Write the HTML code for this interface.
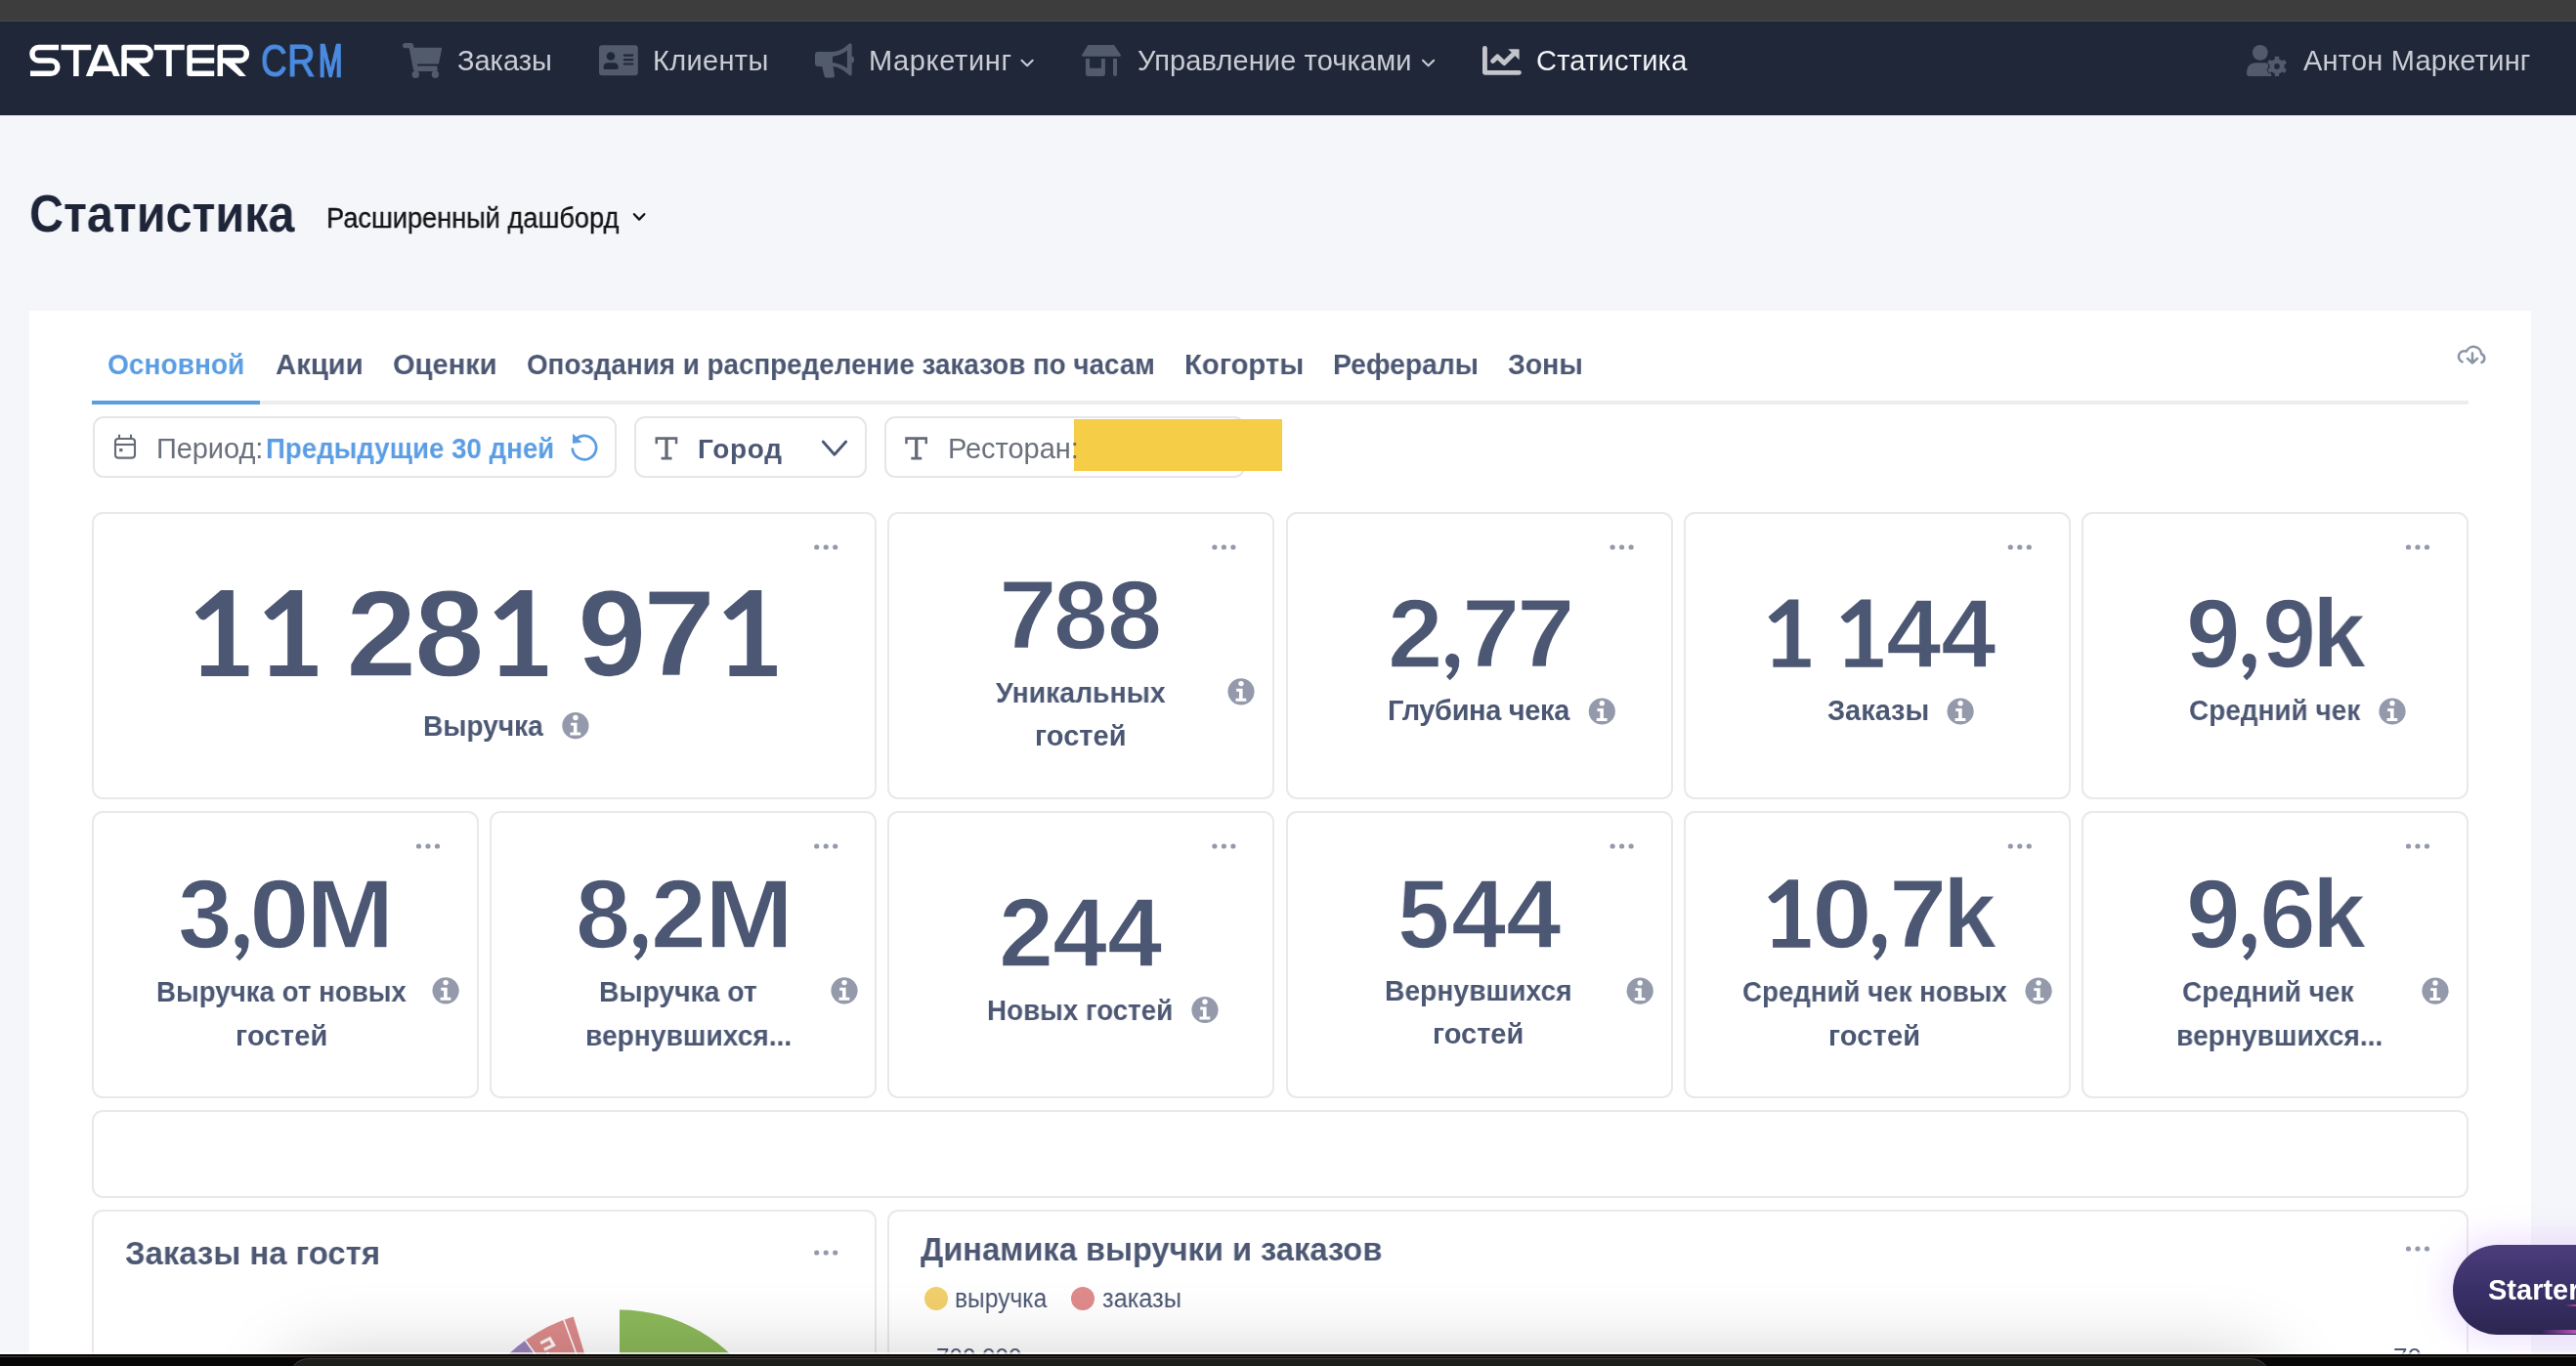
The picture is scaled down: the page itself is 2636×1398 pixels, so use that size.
<!DOCTYPE html>
<html><head><meta charset="utf-8"><style>
html,body{margin:0;padding:0;}
body{width:2636px;height:1398px;overflow:hidden;position:relative;background:#f5f6fa;font-family:"Liberation Sans",sans-serif;}
.a{position:absolute;}
.tx{position:absolute;white-space:nowrap;font-family:"Liberation Sans",sans-serif;will-change:transform;}
.card{position:absolute;box-sizing:border-box;border:2px solid #eae8ea;border-radius:11px;background:#fff;}
.fbox{position:absolute;box-sizing:border-box;border:2px solid #e6e6e8;border-radius:11px;background:#fff;}
svg{position:absolute;left:0;top:0;overflow:visible;}
</style></head><body>

<div class="a" style="left:0;top:0;width:2636px;height:22px;background:#3d3d3d"></div>
<div class="a" style="left:0;top:21px;width:2636px;height:1px;background:#4a4a4a"></div>
<div class="a" style="left:0;top:22px;width:2636px;height:96px;background:#1f2739"></div>
<div class="a" style="left:30px;top:318px;width:2560px;height:1080px;background:#fff"></div>
<div class="a" style="left:94px;top:410px;width:2432px;height:4px;background:#ededee"></div>
<div class="a" style="left:94px;top:410px;width:172px;height:4px;background:#5a9de3"></div>
<div class="fbox" style="left:95px;top:426px;width:536px;height:63px"></div>
<div class="fbox" style="left:649px;top:426px;width:238px;height:63px"></div>
<div class="fbox" style="left:905px;top:426px;width:369px;height:63px"></div>
<div class="card" style="left:94.0px;top:524px;width:803.2px;height:294px"></div>
<div class="card" style="left:908.4px;top:524px;width:396.0px;height:294px"></div>
<div class="card" style="left:1315.6px;top:524px;width:396.0px;height:294px"></div>
<div class="card" style="left:1722.8px;top:524px;width:396.0px;height:294px"></div>
<div class="card" style="left:2130.0px;top:524px;width:396.0px;height:294px"></div>
<div class="card" style="left:94.0px;top:830px;width:396.0px;height:294px"></div>
<div class="card" style="left:501.2px;top:830px;width:396.0px;height:294px"></div>
<div class="card" style="left:908.4px;top:830px;width:396.0px;height:294px"></div>
<div class="card" style="left:1315.6px;top:830px;width:396.0px;height:294px"></div>
<div class="card" style="left:1722.8px;top:830px;width:396.0px;height:294px"></div>
<div class="card" style="left:2130.0px;top:830px;width:396.0px;height:294px"></div>
<div class="card" style="left:94.0px;top:1136px;width:2432.0px;height:90px"></div>
<div class="card" style="left:94.0px;top:1238px;width:803.2px;height:262px"></div>
<div class="card" style="left:908.4px;top:1238px;width:1617.6px;height:262px"></div>
<div class="a" style="left:1099.4px;top:428.6px;width:213.1px;height:53.8px;background:#f6cd46"></div>
<svg width="2636" height="1398" viewBox="0 0 2636 1398"><circle cx="835.7" cy="560" r="2.6" fill="#949aab"/><circle cx="845.2" cy="560" r="2.6" fill="#949aab"/><circle cx="854.7" cy="560" r="2.6" fill="#949aab"/><circle cx="1242.9" cy="560" r="2.6" fill="#949aab"/><circle cx="1252.4" cy="560" r="2.6" fill="#949aab"/><circle cx="1261.9" cy="560" r="2.6" fill="#949aab"/><circle cx="1650.1" cy="560" r="2.6" fill="#949aab"/><circle cx="1659.6" cy="560" r="2.6" fill="#949aab"/><circle cx="1669.1" cy="560" r="2.6" fill="#949aab"/><circle cx="2057.3" cy="560" r="2.6" fill="#949aab"/><circle cx="2066.8" cy="560" r="2.6" fill="#949aab"/><circle cx="2076.3" cy="560" r="2.6" fill="#949aab"/><circle cx="2464.5" cy="560" r="2.6" fill="#949aab"/><circle cx="2474.0" cy="560" r="2.6" fill="#949aab"/><circle cx="2483.5" cy="560" r="2.6" fill="#949aab"/><circle cx="428.5" cy="866" r="2.6" fill="#949aab"/><circle cx="438.0" cy="866" r="2.6" fill="#949aab"/><circle cx="447.5" cy="866" r="2.6" fill="#949aab"/><circle cx="835.7" cy="866" r="2.6" fill="#949aab"/><circle cx="845.2" cy="866" r="2.6" fill="#949aab"/><circle cx="854.7" cy="866" r="2.6" fill="#949aab"/><circle cx="1242.9" cy="866" r="2.6" fill="#949aab"/><circle cx="1252.4" cy="866" r="2.6" fill="#949aab"/><circle cx="1261.9" cy="866" r="2.6" fill="#949aab"/><circle cx="1650.1" cy="866" r="2.6" fill="#949aab"/><circle cx="1659.6" cy="866" r="2.6" fill="#949aab"/><circle cx="1669.1" cy="866" r="2.6" fill="#949aab"/><circle cx="2057.3" cy="866" r="2.6" fill="#949aab"/><circle cx="2066.8" cy="866" r="2.6" fill="#949aab"/><circle cx="2076.3" cy="866" r="2.6" fill="#949aab"/><circle cx="2464.5" cy="866" r="2.6" fill="#949aab"/><circle cx="2474.0" cy="866" r="2.6" fill="#949aab"/><circle cx="2483.5" cy="866" r="2.6" fill="#949aab"/><circle cx="835.7" cy="1282" r="2.6" fill="#949aab"/><circle cx="845.2" cy="1282" r="2.6" fill="#949aab"/><circle cx="854.7" cy="1282" r="2.6" fill="#949aab"/><circle cx="2464.5" cy="1278" r="2.6" fill="#949aab"/><circle cx="2474.0" cy="1278" r="2.6" fill="#949aab"/><circle cx="2483.5" cy="1278" r="2.6" fill="#949aab"/><g transform="translate(588.9,742.7)"><circle r="13.6" fill="#949aab"/><circle cx="0" cy="-8.2" r="2.7" fill="#fff"/><path d="M-4.8,-3 H1.6 V6.9 H5.3 V9.9 H-5.5 V6.9 H-2 V-0.1 H-4.8 Z" fill="#fff"/></g><g transform="translate(1270,707.8)"><circle r="13.6" fill="#949aab"/><circle cx="0" cy="-8.2" r="2.7" fill="#fff"/><path d="M-4.8,-3 H1.6 V6.9 H5.3 V9.9 H-5.5 V6.9 H-2 V-0.1 H-4.8 Z" fill="#fff"/></g><g transform="translate(1639.3,728)"><circle r="13.6" fill="#949aab"/><circle cx="0" cy="-8.2" r="2.7" fill="#fff"/><path d="M-4.8,-3 H1.6 V6.9 H5.3 V9.9 H-5.5 V6.9 H-2 V-0.1 H-4.8 Z" fill="#fff"/></g><g transform="translate(2006.1,728)"><circle r="13.6" fill="#949aab"/><circle cx="0" cy="-8.2" r="2.7" fill="#fff"/><path d="M-4.8,-3 H1.6 V6.9 H5.3 V9.9 H-5.5 V6.9 H-2 V-0.1 H-4.8 Z" fill="#fff"/></g><g transform="translate(2448,728)"><circle r="13.6" fill="#949aab"/><circle cx="0" cy="-8.2" r="2.7" fill="#fff"/><path d="M-4.8,-3 H1.6 V6.9 H5.3 V9.9 H-5.5 V6.9 H-2 V-0.1 H-4.8 Z" fill="#fff"/></g><g transform="translate(456.1,1013.8)"><circle r="13.6" fill="#949aab"/><circle cx="0" cy="-8.2" r="2.7" fill="#fff"/><path d="M-4.8,-3 H1.6 V6.9 H5.3 V9.9 H-5.5 V6.9 H-2 V-0.1 H-4.8 Z" fill="#fff"/></g><g transform="translate(864,1013.8)"><circle r="13.6" fill="#949aab"/><circle cx="0" cy="-8.2" r="2.7" fill="#fff"/><path d="M-4.8,-3 H1.6 V6.9 H5.3 V9.9 H-5.5 V6.9 H-2 V-0.1 H-4.8 Z" fill="#fff"/></g><g transform="translate(1233,1033.5)"><circle r="13.6" fill="#949aab"/><circle cx="0" cy="-8.2" r="2.7" fill="#fff"/><path d="M-4.8,-3 H1.6 V6.9 H5.3 V9.9 H-5.5 V6.9 H-2 V-0.1 H-4.8 Z" fill="#fff"/></g><g transform="translate(1678.2,1014.2)"><circle r="13.6" fill="#949aab"/><circle cx="0" cy="-8.2" r="2.7" fill="#fff"/><path d="M-4.8,-3 H1.6 V6.9 H5.3 V9.9 H-5.5 V6.9 H-2 V-0.1 H-4.8 Z" fill="#fff"/></g><g transform="translate(2086.1,1014.2)"><circle r="13.6" fill="#949aab"/><circle cx="0" cy="-8.2" r="2.7" fill="#fff"/><path d="M-4.8,-3 H1.6 V6.9 H5.3 V9.9 H-5.5 V6.9 H-2 V-0.1 H-4.8 Z" fill="#fff"/></g><g transform="translate(2492,1014.2)"><circle r="13.6" fill="#949aab"/><circle cx="0" cy="-8.2" r="2.7" fill="#fff"/><path d="M-4.8,-3 H1.6 V6.9 H5.3 V9.9 H-5.5 V6.9 H-2 V-0.1 H-4.8 Z" fill="#fff"/></g><g transform="translate(412,44)" fill="#525b6b"><path d="M0,2.6 Q0,0 2.6,0 H8.6 Q10.6,0 11,2 L11.5,4.8 H39.2 Q40.4,4.8 40.1,6 L37.2,20.3 Q37,21.5 35.8,21.5 H14.8 L15.3,23.5 H34.4 Q35.6,23.5 35.6,24.7 V27.7 Q35.6,28.9 34.4,28.9 H13.3 Q11.3,28.9 10.9,27 L6.7,5.2 H2.6 Q0,5.2 0,2.6 Z"/><circle cx="13.3" cy="32.2" r="3.7"/><circle cx="33.4" cy="32.2" r="3.7"/></g><g transform="translate(613,46.3)"><rect x="0" y="0" width="39.8" height="31" rx="3.2" fill="#525b6b"/><circle cx="12" cy="11.2" r="4.3" fill="#1f2739"/><path d="M4.5,23 Q4.5,18 9,18 H15.2 Q19.7,18 19.7,23 Q19.7,24.7 18,24.7 H6.2 Q4.5,24.7 4.5,23 Z" fill="#1f2739"/><rect x="24.7" y="9.2" width="10.7" height="2.2" rx="1.1" fill="#1f2739"/><rect x="24.7" y="13.7" width="10.7" height="2.2" rx="1.1" fill="#1f2739"/><rect x="24.7" y="18.1" width="10.7" height="2.2" rx="1.1" fill="#1f2739"/></g><g transform="translate(834,44)"><path fill-rule="evenodd" fill="#525b6b" d="M3,9.1 H18 Q26,9 34.5,1 Q37.7,-1.2 37.7,3 V13.7 H38.3 Q40,13.7 40,17 Q40,20.3 38.3,20.3 H37.7 V31 Q37.7,35 34.5,32.5 Q26,24.5 18.5,24 L20,33.6 Q20.2,35.4 18.2,35.4 H11.3 Q10,35.4 9.6,34 L7.1,24 H3 Q0,24 0,21 V12 Q0,9.1 3,9.1 Z M18,13.7 Q26,12.8 32.9,7.7 V25.8 Q26,21 18,20 Z"/></g><g transform="translate(1107,45.6)" fill="#525b6b"><path d="M6.4,0.3 H33 L39.9,10.6 Q40.6,12.2 38.6,12.2 H1.4 Q-0.6,12.2 0.1,10.6 Z"/><path d="M3.9,14.4 H8.1 V24.2 H19.9 V14.4 H23.9 V30.2 Q23.9,32.3 21.8,32.3 H6 Q3.9,32.3 3.9,30.2 Z"/><path d="M32,14.4 H36 V30.3 Q36,32.3 34,32.3 Q32,32.3 32,30.3 Z"/></g><g transform="translate(1517,47)" fill="#c3c5ca"><path d="M2.45,0 Q4.9,0 4.9,2.45 V24.9 H37.45 Q39.9,24.9 39.9,27.35 Q39.9,29.8 37.45,29.8 H2.45 Q0,29.8 0,27.35 V2.45 Q0,0 2.45,0 Z"/><polyline points="10.6,15.4 15.3,10.9 22.2,17.6 31.5,8.4" fill="none" stroke="#c3c5ca" stroke-width="4.9" stroke-linecap="round" stroke-linejoin="round"/><path d="M26.2,3.3 H36.6 Q37.6,3.3 37.6,4.3 V14.3 Z"/></g><g transform="translate(2299,45)" fill="#525b6b"><circle cx="13.8" cy="8.8" r="7.9"/><path d="M0,30.3 Q0,19.3 10,19.3 H18 Q21,19.3 23,20 L25.5,32.9 H2.6 Q0,32.9 0,30.3 Z"/><g transform="translate(31,22.9)"><rect x="-2.2" y="-10.2" width="4.4" height="5" rx="0.6" transform="rotate(0)" stroke="#1f2739" stroke-width="1.6"/><rect x="-2.2" y="-10.2" width="4.4" height="5" rx="0.6" transform="rotate(60)" stroke="#1f2739" stroke-width="1.6"/><rect x="-2.2" y="-10.2" width="4.4" height="5" rx="0.6" transform="rotate(120)" stroke="#1f2739" stroke-width="1.6"/><rect x="-2.2" y="-10.2" width="4.4" height="5" rx="0.6" transform="rotate(180)" stroke="#1f2739" stroke-width="1.6"/><rect x="-2.2" y="-10.2" width="4.4" height="5" rx="0.6" transform="rotate(240)" stroke="#1f2739" stroke-width="1.6"/><rect x="-2.2" y="-10.2" width="4.4" height="5" rx="0.6" transform="rotate(300)" stroke="#1f2739" stroke-width="1.6"/><circle r="8.3" stroke="#1f2739" stroke-width="1.6"/><rect x="-2.2" y="-10.2" width="4.4" height="5" rx="0.6" transform="rotate(0)"/><rect x="-2.2" y="-10.2" width="4.4" height="5" rx="0.6" transform="rotate(60)"/><rect x="-2.2" y="-10.2" width="4.4" height="5" rx="0.6" transform="rotate(120)"/><rect x="-2.2" y="-10.2" width="4.4" height="5" rx="0.6" transform="rotate(180)"/><rect x="-2.2" y="-10.2" width="4.4" height="5" rx="0.6" transform="rotate(240)"/><rect x="-2.2" y="-10.2" width="4.4" height="5" rx="0.6" transform="rotate(300)"/><circle r="7.5"/><circle r="2.8" fill="#1f2739"/></g></g><polyline points="1045.5,61.8 1051.1,67.2 1056.7,61.8" fill="none" stroke="#c9ccd3" stroke-width="2.1" stroke-linecap="round" stroke-linejoin="round"/><polyline points="1456,61.8 1461.6,67.2 1467.2,61.8" fill="none" stroke="#c9ccd3" stroke-width="2.1" stroke-linecap="round" stroke-linejoin="round"/><polyline points="648.9,219.2 654.1,224.6 659.3,219.2" fill="none" stroke="#141414" stroke-width="2.3" stroke-linecap="round" stroke-linejoin="round"/><g transform="translate(2515,350)" fill="none" stroke="#8c94a8" stroke-width="2.5" stroke-linecap="round" stroke-linejoin="round"><path d="M4.6,20.4 A5.4,5.4 0 0 1 8.9,9.6 A8,8 0 0 1 24.2,12.4 A4.6,4.6 0 0 1 24.5,21"/><path d="M15,11.5 V21.5 M10,16.8 L15,21.5 L20,16.8"/></g><g fill="none" stroke="#646a78" stroke-width="2.1"><rect x="118" y="449" width="20" height="19.6" rx="3"/><line x1="118" y1="455" x2="138" y2="455"/><line x1="122" y1="445.5" x2="122" y2="449" stroke-linecap="round"/><line x1="134" y1="445.5" x2="134" y2="449" stroke-linecap="round"/></g><rect x="122.2" y="459" width="3.2" height="3.2" fill="#646a78"/><path d="M585.8,459.6 A12.2,12.2 0 1 0 589.6,449.2" fill="none" stroke="#5a9de3" stroke-width="2.7" stroke-linecap="round"/><path d="M586.6,444.6 L586.4,453.3 L594.6,452.4 Z" fill="#5a9de3" stroke="#5a9de3" stroke-width="1" stroke-linejoin="round"/><g transform="translate(0.0,0)" fill="#646a78"><path d="M670.5,447.3 H693.3 V454.3 H690.8 V450 H683.7 V467.8 H687.5 V470.5 H676.6 V467.8 H680.4 V450 H673 V454.3 H670.5 Z"/></g><g transform="translate(255.7,0)" fill="#646a78"><path d="M670.5,447.3 H693.3 V454.3 H690.8 V450 H683.7 V467.8 H687.5 V470.5 H676.6 V467.8 H680.4 V450 H673 V454.3 H670.5 Z"/></g><polyline points="842.2,452 853.9,465.2 865.7,452" fill="none" stroke="#4c5773" stroke-width="2.8" stroke-linecap="round" stroke-linejoin="round"/><circle cx="958" cy="1329" r="12" fill="#f1cf6b"/><circle cx="1108" cy="1329" r="12" fill="#e08b8b"/><path d="M634,1505 L634.00,1340.50 A164.5,164.5 0 0 1 776.46,1587.25 Z" fill="#8cb95a"/><path d="M634,1505 L537.54,1371.75 A164.5,164.5 0 0 1 586.73,1347.44 Z" fill="#dd8a8a"/><path d="M634,1505 L469.50,1505.00 A164.5,164.5 0 0 1 537.54,1371.75 Z" fill="#9c84bb"/><line x1="634" y1="1505" x2="537.54" y2="1371.75" stroke="#fff" stroke-width="1.6"/><line x1="634" y1="1505" x2="576.93" y2="1350.72" stroke="#fff" stroke-width="1.6"/><polyline points="553.2,1374.6 562.6,1369.8 566.6,1376.6 556.8,1381.2" fill="none" stroke="#fff" stroke-width="3.2" opacity="0.95"/><circle cx="560.6" cy="1385" r="1.6" fill="#fff"/></svg>
<svg width="2636" height="1398" viewBox="0 0 2636 1398">
<g fill="none" stroke="#ffffff" stroke-width="5.5" stroke-linejoin="round">
<path d="M60,48.45 H39.5 A6.78,6.78 0 0 0 39.5,62 H52.2 A6.65,6.65 0 0 1 52.2,75.3 H31"/>
<path d="M62.5,48.45 H93.2 M77.85,48.45 V78"/>
<path d="M127.05,78 V48.45 H147.6 A6.78,6.78 0 0 1 147.6,62 H127.05"/>
<path d="M157.8,48.45 H188.75 M173,48.45 V78"/>
<path d="M219.2,48.45 H194.05 V75.3 H219.2 M194.05,62 H219.2"/>
<path d="M225.3,78 V48.45 H245.8 A6.78,6.78 0 0 1 245.8,62 H225.3"/>
</g>
<g fill="#ffffff">
<path fill-rule="evenodd" d="M100.8,45.7 H109.5 L122.8,78 H116.2 L114.1,72.9 H96.4 L94.6,78 H87.8 Z M105.3,51.6 L111.6,67.4 H99 Z"/>
<path d="M128.5,62 H140.1 L153.8,78 H146.2 Z"/>
<path d="M226.7,62 H237.7 L251.8,78 H245 Z"/>
</g>
</svg>
<div class="tx" style="left:266.9px;top:38.9px;font-size:46px;line-height:46px;font-weight:400;color:#4a8ae0;-webkit-text-stroke:1.2px #4a8ae0;transform:scaleX(0.8);transform-origin:0 0">C</div>
<div class="tx" style="left:294.2px;top:38.9px;font-size:46px;line-height:46px;font-weight:400;color:#4a8ae0;-webkit-text-stroke:1.2px #4a8ae0;transform:scaleX(0.86);transform-origin:0 0">R</div>
<div class="tx" style="left:325.5px;top:38.9px;font-size:46px;line-height:46px;font-weight:400;color:#4a8ae0;-webkit-text-stroke:2.4px #4a8ae0;transform:scaleX(0.635);transform-origin:0 0">M</div>
<div class="tx" style="left:353.63px;top:585.9px;font-size:126px;line-height:126px;font-weight:700;color:#4c5773;transform:scaleX(1.034);transform-origin:0 0;-webkit-text-stroke:1.4px #fff">2</div>
<div class="tx" style="left:423.79px;top:585.9px;font-size:126px;line-height:126px;font-weight:700;color:#4c5773;transform:scaleX(1.022);transform-origin:0 0;-webkit-text-stroke:1.4px #fff">8</div>
<div class="tx" style="left:591.18px;top:585.9px;font-size:126px;line-height:126px;font-weight:700;color:#4c5773;transform:scaleX(1.005);transform-origin:0 0;-webkit-text-stroke:1.4px #fff">9</div>
<div class="tx" style="left:658.33px;top:585.9px;font-size:126px;line-height:126px;font-weight:700;color:#4c5773;transform:scaleX(1.062);transform-origin:0 0;-webkit-text-stroke:1.4px #fff">7</div>
<div class="tx" style="left:1021.53px;top:579.3px;font-size:100px;line-height:100px;font-weight:700;color:#4c5773;transform:scaleX(1.073);transform-origin:0 0;-webkit-text-stroke:1.4px #fff">7</div>
<div class="tx" style="left:1077.99px;top:579.3px;font-size:100px;line-height:100px;font-weight:700;color:#4c5773;transform:scaleX(1.002);transform-origin:0 0;-webkit-text-stroke:1.4px #fff">8</div>
<div class="tx" style="left:1133.26px;top:579.3px;font-size:100px;line-height:100px;font-weight:700;color:#4c5773;transform:scaleX(1.010);transform-origin:0 0;-webkit-text-stroke:1.4px #fff">8</div>
<div class="tx" style="left:1419.63px;top:597.9px;font-size:100px;line-height:100px;font-weight:700;color:#4c5773;transform:scaleX(1.017);transform-origin:0 0;-webkit-text-stroke:1.4px #fff">2</div>
<div class="tx" style="left:1496.17px;top:597.9px;font-size:100px;line-height:100px;font-weight:700;color:#4c5773;transform:scaleX(1.067);transform-origin:0 0;-webkit-text-stroke:1.4px #fff">7</div>
<div class="tx" style="left:1551.76px;top:597.9px;font-size:100px;line-height:100px;font-weight:700;color:#4c5773;transform:scaleX(1.069);transform-origin:0 0;-webkit-text-stroke:1.4px #fff">7</div>
<div class="tx" style="left:1929.97px;top:597.8px;font-size:100px;line-height:100px;font-weight:700;color:#4c5773;transform:scaleX(1.017);transform-origin:0 0;-webkit-text-stroke:1.4px #fff">4</div>
<div class="tx" style="left:1985.96px;top:597.8px;font-size:100px;line-height:100px;font-weight:700;color:#4c5773;transform:scaleX(1.019);transform-origin:0 0;-webkit-text-stroke:1.4px #fff">4</div>
<div class="tx" style="left:2237.13px;top:597.9px;font-size:100px;line-height:100px;font-weight:700;color:#4c5773;transform:scaleX(0.994);transform-origin:0 0;-webkit-text-stroke:1.4px #fff">9</div>
<div class="tx" style="left:2314.53px;top:597.9px;font-size:100px;line-height:100px;font-weight:700;color:#4c5773;transform:scaleX(0.991);transform-origin:0 0;-webkit-text-stroke:1.4px #fff">9</div>
<div class="tx" style="left:2366.27px;top:597.9px;font-size:100px;line-height:100px;font-weight:700;color:#4c5773;transform:scaleX(0.991);transform-origin:0 0;-webkit-text-stroke:1.4px #fff">k</div>
<div class="tx" style="left:182.20px;top:885.0px;font-size:100px;line-height:100px;font-weight:700;color:#4c5773;transform:scaleX(1.000);transform-origin:0 0;-webkit-text-stroke:1.4px #fff">3</div>
<div class="tx" style="left:254.96px;top:885.0px;font-size:100px;line-height:100px;font-weight:700;color:#4c5773;transform:scaleX(1.109);transform-origin:0 0;-webkit-text-stroke:1.4px #fff">0</div>
<div class="tx" style="left:313.19px;top:885.0px;font-size:100px;line-height:100px;font-weight:700;color:#4c5773;transform:scaleX(1.087);transform-origin:0 0;-webkit-text-stroke:1.4px #fff">M</div>
<div class="tx" style="left:588.57px;top:884.8px;font-size:100px;line-height:100px;font-weight:700;color:#4c5773;transform:scaleX(1.008);transform-origin:0 0;-webkit-text-stroke:1.4px #fff">8</div>
<div class="tx" style="left:665.81px;top:884.8px;font-size:100px;line-height:100px;font-weight:700;color:#4c5773;transform:scaleX(1.021);transform-origin:0 0;-webkit-text-stroke:1.4px #fff">2</div>
<div class="tx" style="left:720.94px;top:884.8px;font-size:100px;line-height:100px;font-weight:700;color:#4c5773;transform:scaleX(1.094);transform-origin:0 0;-webkit-text-stroke:1.4px #fff">M</div>
<div class="tx" style="left:1022.47px;top:903.7px;font-size:100px;line-height:100px;font-weight:700;color:#4c5773;transform:scaleX(1.009);transform-origin:0 0;-webkit-text-stroke:1.4px #fff">2</div>
<div class="tx" style="left:1077.28px;top:903.7px;font-size:100px;line-height:100px;font-weight:700;color:#4c5773;transform:scaleX(1.008);transform-origin:0 0;-webkit-text-stroke:1.4px #fff">4</div>
<div class="tx" style="left:1132.87px;top:903.7px;font-size:100px;line-height:100px;font-weight:700;color:#4c5773;transform:scaleX(1.015);transform-origin:0 0;-webkit-text-stroke:1.4px #fff">4</div>
<div class="tx" style="left:1430.16px;top:884.7px;font-size:100px;line-height:100px;font-weight:700;color:#4c5773;transform:scaleX(0.960);transform-origin:0 0;-webkit-text-stroke:1.4px #fff">5</div>
<div class="tx" style="left:1485.28px;top:884.7px;font-size:100px;line-height:100px;font-weight:700;color:#4c5773;transform:scaleX(1.012);transform-origin:0 0;-webkit-text-stroke:1.4px #fff">4</div>
<div class="tx" style="left:1540.76px;top:884.7px;font-size:100px;line-height:100px;font-weight:700;color:#4c5773;transform:scaleX(1.019);transform-origin:0 0;-webkit-text-stroke:1.4px #fff">4</div>
<div class="tx" style="left:1853.63px;top:884.7px;font-size:100px;line-height:100px;font-weight:700;color:#4c5773;transform:scaleX(1.113);transform-origin:0 0;-webkit-text-stroke:1.4px #fff">0</div>
<div class="tx" style="left:1933.47px;top:884.7px;font-size:100px;line-height:100px;font-weight:700;color:#4c5773;transform:scaleX(1.067);transform-origin:0 0;-webkit-text-stroke:1.4px #fff">7</div>
<div class="tx" style="left:1987.87px;top:884.7px;font-size:100px;line-height:100px;font-weight:700;color:#4c5773;transform:scaleX(0.991);transform-origin:0 0;-webkit-text-stroke:1.4px #fff">k</div>
<div class="tx" style="left:2237.13px;top:884.6px;font-size:100px;line-height:100px;font-weight:700;color:#4c5773;transform:scaleX(0.994);transform-origin:0 0;-webkit-text-stroke:1.4px #fff">9</div>
<div class="tx" style="left:2312.04px;top:884.6px;font-size:100px;line-height:100px;font-weight:700;color:#4c5773;transform:scaleX(1.040);transform-origin:0 0;-webkit-text-stroke:1.4px #fff">6</div>
<div class="tx" style="left:2366.27px;top:884.6px;font-size:100px;line-height:100px;font-weight:700;color:#4c5773;transform:scaleX(0.991);transform-origin:0 0;-webkit-text-stroke:1.4px #fff">k</div>
<svg width="2636" height="1398" viewBox="0 0 2636 1398"><path d="M226.10,604.10 L238.80,604.10 L238.80,681.00 L254.40,681.00 L254.40,691.90 L205.95,691.90 L205.95,681.00 L223.80,681.00 L223.80,623.10 L210.70,633.50 Q207.60,635.70 204.20,632.70 L199.80,626.60 Z" fill="#4c5773"/><path d="M296.50,604.10 L309.20,604.10 L309.20,681.00 L324.80,681.00 L324.80,691.90 L276.35,691.90 L276.35,681.00 L294.20,681.00 L294.20,623.10 L281.10,633.50 Q278.00,635.70 274.60,632.70 L270.20,626.60 Z" fill="#4c5773"/><path d="M531.80,604.10 L544.50,604.10 L544.50,681.00 L560.10,681.00 L560.10,691.90 L511.65,691.90 L511.65,681.00 L529.50,681.00 L529.50,623.10 L516.40,633.50 Q513.30,635.70 509.90,632.70 L505.50,626.60 Z" fill="#4c5773"/><path d="M766.60,604.10 L779.30,604.10 L779.30,681.00 L794.90,681.00 L794.90,691.90 L746.45,691.90 L746.45,681.00 L764.30,681.00 L764.30,623.10 L751.20,633.50 Q748.10,635.70 744.70,632.70 L740.30,626.60 Z" fill="#4c5773"/><path d="M1493.30,676.00 A7.1,7.1 0 1 0 1485.60,683.05 Q1487.50,686.00 1479.90,692.20 L1483.70,696.20 Q1493.80,688.00 1493.30,676.00 Z" fill="#4c5773"/><path d="M1830.29,613.40 L1840.33,613.40 L1840.33,674.18 L1852.66,674.18 L1852.66,682.80 L1814.36,682.80 L1814.36,674.18 L1828.47,674.18 L1828.47,628.42 L1818.12,636.64 Q1815.67,638.38 1812.98,636.01 L1809.50,631.18 Z" fill="#4c5773"/><path d="M1904.29,613.40 L1914.33,613.40 L1914.33,674.18 L1926.66,674.18 L1926.66,682.80 L1888.36,682.80 L1888.36,674.18 L1902.47,674.18 L1902.47,628.42 L1892.12,636.64 Q1889.67,638.38 1886.98,636.01 L1883.50,631.18 Z" fill="#4c5773"/><path d="M2308.70,676.00 A7.1,7.1 0 1 0 2301.00,683.05 Q2302.90,686.00 2295.30,692.20 L2299.10,696.20 Q2309.20,688.00 2308.70,676.00 Z" fill="#4c5773"/><path d="M254.55,963.10 A7.1,7.1 0 1 0 246.85,970.15 Q248.75,973.10 241.15,979.30 L244.95,983.30 Q255.05,975.10 254.55,963.10 Z" fill="#4c5773"/><path d="M662.35,962.90 A7.1,7.1 0 1 0 654.65,969.95 Q656.55,972.90 648.95,979.10 L652.75,983.10 Q662.85,974.90 662.35,962.90 Z" fill="#4c5773"/><path d="M1829.99,900.30 L1840.03,900.30 L1840.03,961.08 L1852.36,961.08 L1852.36,969.70 L1814.06,969.70 L1814.06,961.08 L1828.17,961.08 L1828.17,915.32 L1817.82,923.54 Q1815.37,925.28 1812.68,922.91 L1809.20,918.08 Z" fill="#4c5773"/><path d="M1930.35,962.80 A7.1,7.1 0 1 0 1922.65,969.85 Q1924.55,972.80 1916.95,979.00 L1920.75,983.00 Q1930.85,974.80 1930.35,962.80 Z" fill="#4c5773"/><path d="M2308.70,962.70 A7.1,7.1 0 1 0 2301.00,969.75 Q2302.90,972.70 2295.30,978.90 L2299.10,982.90 Q2309.20,974.70 2308.70,962.70 Z" fill="#4c5773"/></svg>
<div class="tx" style="left:468.1px;top:48.3px;font-size:29px;line-height:29px;font-weight:400;color:#c9ccd3;letter-spacing:-0.02px;">Заказы</div>
<div class="tx" style="left:668.0px;top:48.3px;font-size:29px;line-height:29px;font-weight:400;color:#c9ccd3;letter-spacing:0.33px;">Клиенты</div>
<div class="tx" style="left:889.0px;top:48.3px;font-size:29px;line-height:29px;font-weight:400;color:#c9ccd3;letter-spacing:0.62px;">Маркетинг</div>
<div class="tx" style="left:1164.0px;top:48.3px;font-size:29px;line-height:29px;font-weight:400;color:#c9ccd3;letter-spacing:0.12px;">Управление точками</div>
<div class="tx" style="left:1572.0px;top:48.3px;font-size:29px;line-height:29px;font-weight:400;color:#f3f4f6;letter-spacing:0.22px;">Статистика</div>
<div class="tx" style="left:2357.0px;top:48.3px;font-size:29px;line-height:29px;font-weight:400;color:#c9ccd3;letter-spacing:0.21px;">Антон Маркетинг</div>
<div class="tx" style="left:29.5px;top:191.9px;font-size:53px;line-height:53px;font-weight:700;color:#1e2538;letter-spacing:0.00px;transform:scaleX(0.9163);transform-origin:0 0;">Статистика</div>
<div class="tx" style="left:334.4px;top:209.3px;font-size:29px;line-height:29px;font-weight:400;color:#141414;letter-spacing:0.00px;transform:scaleX(0.9375);transform-origin:0 0;-webkit-text-stroke:0.35px #141414;">Расширенный дашборд</div>
<div class="tx" style="left:109.8px;top:358.0px;font-size:30px;line-height:30px;font-weight:700;color:#5a9de3;letter-spacing:0.00px;transform:scaleX(0.9367);transform-origin:0 0;">Основной</div>
<div class="tx" style="left:281.5px;top:358.0px;font-size:30px;line-height:30px;font-weight:700;color:#4c5773;letter-spacing:0.00px;transform:scaleX(0.9753);transform-origin:0 0;">Акции</div>
<div class="tx" style="left:402.0px;top:358.0px;font-size:30px;line-height:30px;font-weight:700;color:#4c5773;letter-spacing:0.00px;transform:scaleX(0.9692);transform-origin:0 0;">Оценки</div>
<div class="tx" style="left:539.0px;top:358.0px;font-size:30px;line-height:30px;font-weight:700;color:#4c5773;letter-spacing:0.00px;transform:scaleX(0.9262);transform-origin:0 0;">Опоздания и распределение заказов по часам</div>
<div class="tx" style="left:1212.0px;top:358.0px;font-size:30px;line-height:30px;font-weight:700;color:#4c5773;letter-spacing:0.00px;transform:scaleX(0.9752);transform-origin:0 0;">Когорты</div>
<div class="tx" style="left:1364.0px;top:358.0px;font-size:30px;line-height:30px;font-weight:700;color:#4c5773;letter-spacing:0.00px;transform:scaleX(0.9416);transform-origin:0 0;">Рефералы</div>
<div class="tx" style="left:1543.0px;top:358.0px;font-size:30px;line-height:30px;font-weight:700;color:#4c5773;letter-spacing:0.00px;transform:scaleX(0.9487);transform-origin:0 0;">Зоны</div>
<div class="tx" style="left:159.5px;top:445.1px;font-size:29px;line-height:29px;font-weight:400;color:#6b707d;letter-spacing:-0.08px;">Период:</div>
<div class="tx" style="left:272.0px;top:445.1px;font-size:29px;line-height:29px;font-weight:700;color:#5a9de3;letter-spacing:0.00px;transform:scaleX(0.9541);transform-origin:0 0;">Предыдущие 30 дней</div>
<div class="tx" style="left:713.8px;top:445.9px;font-size:28px;line-height:28px;font-weight:700;color:#4c5773;letter-spacing:0.70px;">Город</div>
<div class="tx" style="left:970.0px;top:445.0px;font-size:29px;line-height:29px;font-weight:400;color:#6b707d;letter-spacing:-0.04px;">Ресторан:</div>
<div class="tx" style="left:432.8px;top:729.0px;font-size:29px;line-height:29px;font-weight:700;color:#4c5773;letter-spacing:0.00px;transform:scaleX(0.9696);transform-origin:0 0;">Выручка</div>
<div class="tx" style="left:1019.0px;top:694.5px;font-size:29px;line-height:29px;font-weight:700;color:#4c5773;letter-spacing:0.00px;transform:scaleX(0.9774);transform-origin:0 0;">Уникальных</div>
<div class="tx" style="left:1058.7px;top:739.0px;font-size:29px;line-height:29px;font-weight:700;color:#4c5773;letter-spacing:0.06px;">гостей</div>
<div class="tx" style="left:1420.0px;top:712.6px;font-size:29px;line-height:29px;font-weight:700;color:#4c5773;letter-spacing:-0.36px;">Глубина чека</div>
<div class="tx" style="left:1869.8px;top:713.0px;font-size:29px;line-height:29px;font-weight:700;color:#4c5773;letter-spacing:-0.06px;">Заказы</div>
<div class="tx" style="left:2239.7px;top:713.0px;font-size:29px;line-height:29px;font-weight:700;color:#4c5773;letter-spacing:0.00px;transform:scaleX(0.9630);transform-origin:0 0;">Средний чек</div>
<div class="tx" style="left:160.0px;top:1000.8px;font-size:29px;line-height:29px;font-weight:700;color:#4c5773;letter-spacing:0.00px;transform:scaleX(0.9547);transform-origin:0 0;">Выручка от новых</div>
<div class="tx" style="left:241.0px;top:1045.5px;font-size:29px;line-height:29px;font-weight:700;color:#4c5773;letter-spacing:0.20px;">гостей</div>
<div class="tx" style="left:612.8px;top:1000.8px;font-size:29px;line-height:29px;font-weight:700;color:#4c5773;letter-spacing:0.00px;transform:scaleX(0.9742);transform-origin:0 0;">Выручка от</div>
<div class="tx" style="left:599.0px;top:1045.5px;font-size:29px;line-height:29px;font-weight:700;color:#4c5773;letter-spacing:0.00px;transform:scaleX(0.9718);transform-origin:0 0;">вернувшихся...</div>
<div class="tx" style="left:1010.4px;top:1019.5px;font-size:29px;line-height:29px;font-weight:700;color:#4c5773;letter-spacing:0.00px;transform:scaleX(0.9569);transform-origin:0 0;">Новых гостей</div>
<div class="tx" style="left:1417.0px;top:999.7px;font-size:29px;line-height:29px;font-weight:700;color:#4c5773;letter-spacing:0.00px;transform:scaleX(0.9741);transform-origin:0 0;">Вернувшихся</div>
<div class="tx" style="left:1466.0px;top:1044.0px;font-size:29px;line-height:29px;font-weight:700;color:#4c5773;letter-spacing:0.00px;">гостей</div>
<div class="tx" style="left:1782.6px;top:1000.6px;font-size:29px;line-height:29px;font-weight:700;color:#4c5773;letter-spacing:0.00px;transform:scaleX(0.9535);transform-origin:0 0;">Средний чек новых</div>
<div class="tx" style="left:1871.0px;top:1046.0px;font-size:29px;line-height:29px;font-weight:700;color:#4c5773;letter-spacing:0.14px;">гостей</div>
<div class="tx" style="left:2233.0px;top:1000.6px;font-size:29px;line-height:29px;font-weight:700;color:#4c5773;letter-spacing:0.00px;transform:scaleX(0.9646);transform-origin:0 0;">Средний чек</div>
<div class="tx" style="left:2226.7px;top:1046.0px;font-size:29px;line-height:29px;font-weight:700;color:#4c5773;letter-spacing:0.00px;transform:scaleX(0.9723);transform-origin:0 0;">вернувшихся...</div>
<div class="tx" style="left:128.0px;top:1265.0px;font-size:34px;line-height:34px;font-weight:700;color:#4c5773;letter-spacing:0.00px;transform:scaleX(0.9655);transform-origin:0 0;">Заказы на гостя</div>
<div class="tx" style="left:942.2px;top:1260.5px;font-size:34px;line-height:34px;font-weight:700;color:#4c5773;letter-spacing:0.00px;transform:scaleX(0.9599);transform-origin:0 0;">Динамика выручки и заказов</div>
<div class="tx" style="left:976.5px;top:1315.9px;font-size:27px;line-height:27px;font-weight:400;color:#4c5773;letter-spacing:0.00px;transform:scaleX(0.9108);transform-origin:0 0;">выручка</div>
<div class="tx" style="left:1127.9px;top:1315.9px;font-size:27px;line-height:27px;font-weight:400;color:#4c5773;letter-spacing:0.00px;transform:scaleX(0.9369);transform-origin:0 0;">заказы</div>
<div class="tx" style="left:2546.0px;top:1306.0px;font-size:29px;line-height:29px;font-weight:700;color:#ffffff;letter-spacing:0.00px;">Starter</div>
<div class="tx" style="left:958.4px;top:1376.0px;font-size:26px;line-height:26px;font-weight:400;color:#4c5773;letter-spacing:0.00px;transform:scaleX(0.9304);transform-origin:0 0;">700 000</div>
<div class="tx" style="left:2448.5px;top:1376.0px;font-size:26px;line-height:26px;font-weight:400;color:#4c5773;letter-spacing:0.00px;">70</div>
<div class="a" style="left:2510px;top:1274px;width:200px;height:92px;border-radius:46px;background:linear-gradient(180deg,#4b3d7c 0%,#3a3068 50%,#2c2650 100%);box-shadow:0 0 30px 10px rgba(200,150,255,0.25)"></div>
<div class="a" style="left:2600px;top:1361px;width:40px;height:4px;background:linear-gradient(90deg,rgba(220,80,200,0),rgba(220,90,210,0.9))"></div>
<div class="a" style="left:2625px;top:1335px;width:14px;height:2px;background:linear-gradient(90deg,rgba(255,80,160,0),rgba(255,80,160,0.9))"></div>
<div class="tx" style="left:2546.0px;top:1306.0px;font-size:29px;line-height:29px;font-weight:700;color:#fff">Starter</div>
<div class="a" style="left:0;top:1200px;width:2636px;height:186px;overflow:hidden"><div class="a" style="left:300px;top:200px;width:2020px;height:120px;border-radius:30px;background:#000;box-shadow:0 0 80px 10px rgba(0,0,0,0.2)"></div></div>
<div class="a" style="left:0;top:1384px;width:2636px;height:2px;background:rgba(255,255,255,0.7)"></div>
<div class="a" style="left:0;top:1386px;width:2636px;height:12px;background:#050607"></div>
<div class="a" style="left:0;top:1388px;width:2636px;height:1px;background:#5a4c38;opacity:0.7"></div>
<div class="a" style="left:296px;top:1390px;width:2027px;height:40px;border-radius:20px;background:#1c1c19;box-shadow:inset 0 1px 0 #3c3c39"></div>
</body></html>
